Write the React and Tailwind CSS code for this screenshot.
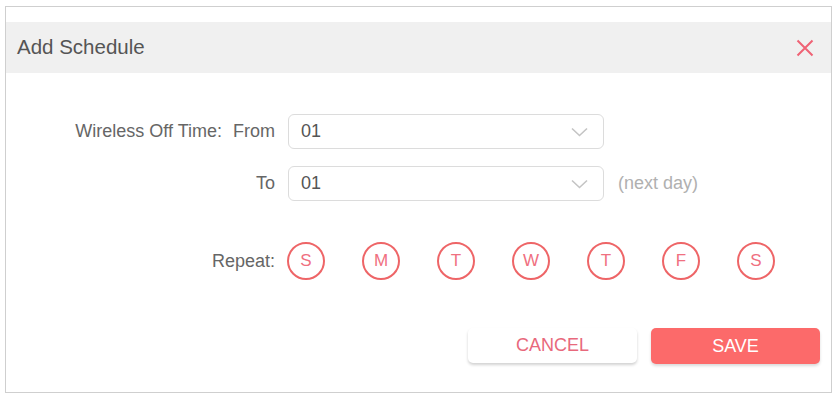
import React, { useState } from 'react';

const DAYS = ['S', 'M', 'T', 'W', 'T', 'F', 'S'];

const Chevron = () => (
  <svg width="17" height="10" viewBox="0 0 17 10" fill="none" className="shrink-0">
    <path d="M1 1.5 L8.5 8.5 L16 1.5" stroke="#c4c4c4" strokeWidth="1.6" />
  </svg>
);

const Select = ({ value }) => (
  <div className="flex items-center justify-between w-[316px] h-[35px] border border-[#dcdcdc] rounded-[6px] bg-white pl-[12px] pr-[15px]">
    <span className="text-[18px] text-[#555]">{value}</span>
    <Chevron />
  </div>
);

const App = () => {
  const [from] = useState('01');
  const [to] = useState('01');

  return (
    <div className="w-[839px] h-[395px] bg-white pt-[6px] pl-[5px] font-['Liberation_Sans',Arial,sans-serif]">
      <div className="w-[827px] h-[387px] border border-[#cfcfcf] bg-white flex flex-col">
        {/* ヘッダー */}
        <div className="mt-[15px] h-[51px] bg-[#f0f0f0] flex items-center justify-between pl-[11px] pr-[17px]">
          <h2 className="text-[20.5px] text-[#555]">Add Schedule</h2>
          <svg width="18" height="18" viewBox="0 0 18 18">
            <path d="M1.5 1.5 L16.5 16.5 M16.5 1.5 L1.5 16.5" stroke="#ef6375" strokeWidth="2" />
          </svg>
        </div>

        {/* 本体 */}
        <div className="pt-[41px] flex flex-col text-[18px] text-[#666]">
          <div className="flex items-center">
            <div className="w-[269px] text-right whitespace-nowrap">
              <span>Wireless Off Time:</span>
              <span className="ml-[11px]">From</span>
            </div>
            <div className="ml-[13px]">
              <Select value={from} />
            </div>
          </div>

          <div className="flex items-center mt-[17px]">
            <div className="w-[269px] text-right">To</div>
            <div className="ml-[13px]">
              <Select value={to} />
            </div>
            <span className="ml-[14px] text-[#b0b0b0]">(next day)</span>
          </div>

          <div className="flex items-center mt-[41px]">
            <div className="w-[269px] text-right">Repeat:</div>
            <div className="ml-[12px] flex gap-[37px]">
              {DAYS.map((d, i) => (
                <div
                  key={i}
                  className="w-[38px] h-[38px] rounded-full border-2 border-[#ee6567] flex items-center justify-center text-[17px] text-[#f07080]"
                >
                  {d}
                </div>
              ))}
            </div>
          </div>

          <div className="flex justify-end gap-[14px] mt-[48px] pr-[11px]">
            <button className="w-[169px] h-[35px] rounded-[5px] bg-white shadow-[0_2px_3px_rgba(0,0,0,0.18)] text-[18px] text-[#e8697c]">
              CANCEL
            </button>
            <button className="w-[169px] h-[36px] rounded-[5px] bg-[#fc6a6a] shadow-[0_2px_3px_rgba(0,0,0,0.15)] text-[18px] text-white">
              SAVE
            </button>
          </div>
        </div>
      </div>
    </div>
  );
};

export default App;
